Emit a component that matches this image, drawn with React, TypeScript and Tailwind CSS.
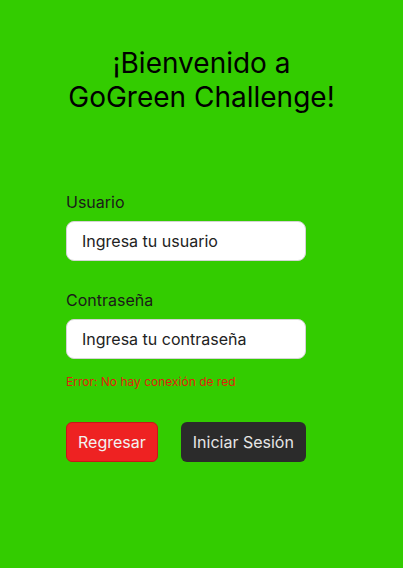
import React, { useState } from "react";

const App: React.FC = () => {
  const [user, setUser] = useState("");
  const [pass, setPass] = useState("");

  return (
    <div
      className="min-h-[568px] w-full bg-[#33cc00] text-black"
      style={{ fontFamily: "Inter, 'Noto Sans', sans-serif" }}
    >
      <div className="flex flex-col items-center pt-[46px]">
        <h1 className="text-center text-[28px] leading-[34px] font-normal">
          ¡Bienvenido a
          <br />
          GoGreen Challenge!
        </h1>
      </div>

      <div className="flex flex-col px-[66px] pt-[78px]">
        <label className="text-[16px] leading-[20px] text-[#1a1a1a]">Usuario</label>
        <input
          value={user}
          onChange={(e) => setUser(e.target.value)}
          placeholder="Ingresa tu usuario"
          className="mt-[9px] h-[40px] w-[240px] rounded-[8px] border border-[#d4d4d4] bg-white px-[15px] text-[16px] text-[#222] placeholder:text-[#222] outline-none"
        />

        <label className="mt-[29px] text-[16px] leading-[20px] text-[#1a1a1a]">Contraseña</label>
        <input
          type="password"
          value={pass}
          onChange={(e) => setPass(e.target.value)}
          placeholder="Ingresa tu contraseña"
          className="mt-[9px] h-[40px] w-[240px] rounded-[8px] border border-[#d4d4d4] bg-white px-[15px] text-[16px] text-[#222] placeholder:text-[#222] outline-none"
        />

        <p className="mt-[15px] text-[12px] leading-[16px] text-[#e01e0e]">
          Error: No hay conexión de red
        </p>

        <div className="mt-[32px] flex gap-[23px]">
          <button className="h-[40px] rounded-[6px] border border-[#c81818] bg-[#ee2222] px-[11px] text-[16px] text-[#f2f2f2]">
            Regresar
          </button>
          <button className="h-[40px] rounded-[6px] bg-[#2b2b2b] px-3 text-[16px] text-[#e6e6e6]">
            Iniciar Sesión
          </button>
        </div>
      </div>
    </div>
  );
};

export default App;
